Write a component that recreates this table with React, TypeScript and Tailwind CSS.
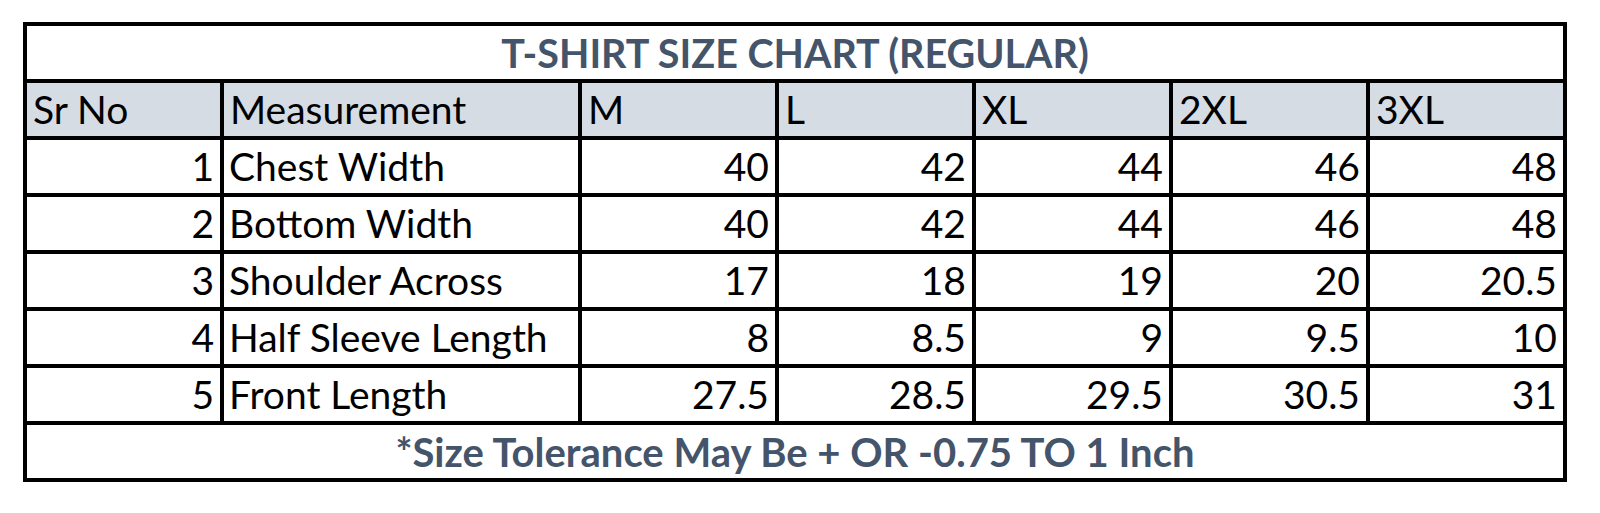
import React from 'react';

const sizes = ['M', 'L', 'XL', '2XL', '3XL'];

const rows: { no: number; name: string; values: string[] }[] = [
  { no: 1, name: 'Chest Width', values: ['40', '42', '44', '46', '48'] },
  { no: 2, name: 'Bottom Width', values: ['40', '42', '44', '46', '48'] },
  { no: 3, name: 'Shoulder Across', values: ['17', '18', '19', '20', '20.5'] },
  { no: 4, name: 'Half Sleeve Length', values: ['8', '8.5', '9', '9.5', '10'] },
  { no: 5, name: 'Front Length', values: ['27.5', '28.5', '29.5', '30.5', '31'] },
];

const cell = 'h-[53px] flex items-center leading-none';

const App = () => {
  return (
    <div className="min-h-screen bg-white pt-[22px] pl-[23px] [font-family:Lato,'Open_Sans',sans-serif]">
      <div className="inline-grid grid-cols-[193px_354px_repeat(5,193px)] gap-[4px] p-[4px] bg-black">
        {/* Title */}
        <div className={`${cell} col-span-7 bg-white justify-center text-[39.5px] font-bold text-[#44546a]`}>
          T-SHIRT SIZE CHART (REGULAR)
        </div>

        {/* Header */}
        <div className={`${cell} bg-[#d6dce4] px-[6px] text-[39px] text-black`}>Sr No</div>
        <div className={`${cell} bg-[#d6dce4] px-[6px] text-[39px] text-black`}>Measurement</div>
        {sizes.map((s) => (
          <div key={s} className={`${cell} bg-[#d6dce4] px-[6px] text-[39px] text-black`}>
            {s}
          </div>
        ))}

        {/* Rows */}
        {rows.map((r) => (
          <React.Fragment key={r.no}>
            <div className={`${cell} bg-white justify-end px-[6px] text-[39px] text-black`}>{r.no}</div>
            <div className={`${cell} bg-white px-[5px] text-[39px] text-black`}>{r.name}</div>
            {r.values.map((v, i) => (
              <div key={i} className={`${cell} bg-white justify-end px-[6px] text-[39px] text-black`}>
                {v}
              </div>
            ))}
          </React.Fragment>
        ))}

        {/* Footer */}
        <div className={`${cell} col-span-7 bg-white justify-center text-[40px] font-bold text-[#44546a]`}>
          *Size Tolerance May Be + OR -0.75 TO 1 Inch
        </div>
      </div>
    </div>
  );
};

export default App;
